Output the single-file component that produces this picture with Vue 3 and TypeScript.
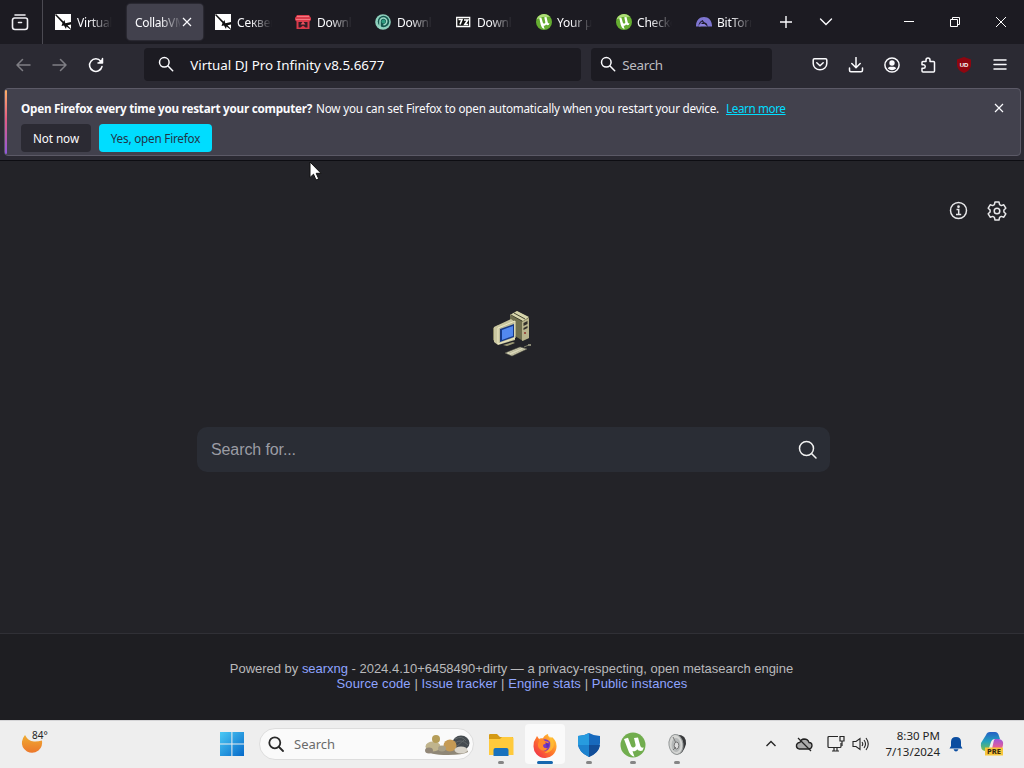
<script setup lang="ts">
interface Tab {
  title: string
  icon: 'arrow' | 'itch' | 'pdown' | 'seven' | 'utorrent' | 'meter' | ''
  active?: boolean
}

const tabs: Tab[] = [
  { title: 'Virtual DJ', icon: 'arrow' },
  { title: 'CollabVM', icon: '', active: true },
  { title: 'Секвенсор', icon: 'arrow' },
  { title: 'Download', icon: 'itch' },
  { title: 'Download', icon: 'pdown' },
  { title: 'Download', icon: 'seven' },
  { title: 'Your µTorrent', icon: 'utorrent' },
  { title: 'Checkout', icon: 'utorrent' },
  { title: 'BitTorrent', icon: 'meter' },
]
</script>

<template>
  <div class="screen">
    <header class="tabbar">
      <div class="view">
        <svg width="18" height="18" viewBox="0 0 18 18" fill="none" stroke="#f0f0f4" stroke-width="1.6" stroke-linecap="round" stroke-linejoin="round">
          <path d="M4 2h10M3.500 5h11a2 2 0 0 1 2 2v7a2.500 2.500 0 0 1-2.500 2.500H4A2.500 2.500 0 0 1 1.500 14V7a2 2 0 0 1 2-2zM7.500 9.500h3" />
        </svg>
      </div>
      <div class="tabs">
        <div v-for="(t, i) in tabs" :key="i" class="tab" :class="{ active: t.active }">
          <svg v-if="t.icon === 'arrow'" class="fav" viewBox="0 0 16 16">
            <path d="M0 0h16v16H0z" fill="#fff" />
            <path d="M0 1l1-1 7.500 7.500 1-1.500.8 3.200L16 8v2.500l-3.500.8L16 15v1l-4.500-3.500L11 15l-2-3.500-2.500.5 1-3z" fill="#111" />
          </svg>
          <svg v-else-if="t.icon === 'itch'" class="fav" viewBox="0 0 16 16">
            <path d="M2 1h12l2 3v2l-1.500 1.500V15h-13V7.500L0 6V4z" fill="#d93b4b" />
            <path d="M2 2.500h12M1 5.500h14" stroke="#f4777f" />
            <path d="M3.500 8h9v5.500h-2l-2.500-2-2.500 2h-2z" fill="#321c26" />
            <path d="M8 7.500l2.500 3h-5z" fill="#ef5360" />
          </svg>
          <svg v-else-if="t.icon === 'pdown'" class="fav" viewBox="0 0 16 16">
            <circle cx="8" cy="8" r="7.800" fill="#8ed0bd" />
            <circle cx="8.500" cy="7.500" r="5.700" fill="#16584f" />
            <path d="M5 14.500V7.500a3.400 3.400 0 1 1 3.400 3.300" fill="none" stroke="#9bd8c5" stroke-width="1.500" />
            <circle cx="8.500" cy="7.500" r="2" fill="#2d9c80" />
          </svg>
          <svg v-else-if="t.icon === 'seven'" class="fav" viewBox="0 0 16 16">
            <path d="M1.700 3.500h13v9h-13z" fill="#111" stroke="#fff" stroke-width="1.300" />
            <path d="M3.500 5.500h3.500L5 10.500M9 6h3.800L9.800 10.500h3.400" fill="none" stroke="#fff" stroke-width="1.600" />
          </svg>
          <svg v-else-if="t.icon === 'utorrent'" class="fav nudge" viewBox="0 0 16 16">
            <circle cx="8" cy="8" r="8" fill="#65ad31" />
            <path d="M.5 5.500a8 8 0 0 1 13.500-2.800L6 3z" fill="#aede78" />
            <path d="M3.300 4l2-.6 1.500 5c.5 1.800 2.700 1.500 2.500-.2L8.300 3.300l2.200-.3 1.300 5.500c.2.800.8.900 1.700.8l-.8 1.800c-1.100.2-2 .1-2.600-.7-.6 1-1.500 1.400-2.500 1.300l1 3.400c-1.800-.1-3.200-2-3.900-4.500z" fill="#fff" />
          </svg>
          <svg v-else-if="t.icon === 'meter'" class="fav nudge" viewBox="0 0 16 16">
            <path d="M0 12.500C-.2 6.500 3.200 3 8 3s8.200 3.500 8 9.500h-4.500c0-2.500-1.200-4-3.500-4s-3.600 1.500-3.500 4z" fill="#7e75d0" />
            <path d="M6 6.500l5 6M3 11.500Q4 7 7 7" fill="none" stroke="#252139" stroke-width="1.200" />
            <path d="M3.500 10h5l3 2.500H3z" fill="#8d83dd" />
          </svg>
          <span class="title">{{ t.title }}</span>
          <svg v-if="t.active" class="close" width="10" height="10" viewBox="0 0 10 10"><path d="M1 1l8 8M9 1L1 9" stroke="#fbfbfe" stroke-width="1.200" /></svg>
        </div>
      </div>
      <div class="tabtool first"><svg width="14" height="14" viewBox="0 0 14 14"><path d="M7 1v12M1 7h12" stroke="#fbfbfe" stroke-width="1.400" /></svg></div>
      <div class="tabtool"><svg width="14" height="14" viewBox="0 0 14 14"><path d="M1.500 4L7 9.500 12.500 4" fill="none" stroke="#fbfbfe" stroke-width="1.400" stroke-linecap="round" /></svg></div>
      <div class="window">
        <div><svg width="12" height="12" viewBox="0 0 12 12"><path d="M1 5.500h10" stroke="#fff" /></svg></div>
        <div><svg width="12" height="12" viewBox="0 0 12 12" fill="none" stroke="#fff"><path d="M1.500 3.500h7v7h-7zM3.500 3V1.500h7v7H9" /></svg></div>
        <div><svg width="12" height="12" viewBox="0 0 12 12"><path d="M1 1l10 10M11 1L1 11" stroke="#fff" stroke-width="1" /></svg></div>
      </div>
    </header>

    <nav class="toolbar">
      <div class="tool dim"><svg width="16" height="16" viewBox="0 0 16 16"><path d="M15 8H2M7.500 2.500L2 8l5.500 5.500" /></svg></div>
      <div class="tool dim"><svg width="16" height="16" viewBox="0 0 16 16"><path d="M1 8h13M8.500 2.500L14 8l-5.500 5.500" /></svg></div>
      <div class="tool"><svg width="16" height="16" viewBox="0 0 16 16"><path d="M14 9.500A6.300 6.300 0 1 1 12.800 4.200M14.500 1.500V6H10" /><path d="M14.500 1.500V6H10z" class="solid" /></svg></div>
      <div class="url">
        <svg width="16" height="16" viewBox="0 0 16 16"><circle cx="6.300" cy="6.300" r="4.800" /><path d="M10 10l4.700 4.700" /></svg>
        <span>Virtual DJ Pro Infinity v8.5.6677</span>
      </div>
      <div class="find">
        <svg width="16" height="16" viewBox="0 0 16 16"><circle cx="6.300" cy="6.300" r="4.800" /><path d="M10 10l4.700 4.700" /></svg>
        <span>Search</span>
      </div>
      <div class="actions">
        <div class="tool"><svg width="16" height="16" viewBox="0 0 16 16"><path d="M2.500 1.800h11a1.300 1.300 0 0 1 1.300 1.300V6.500a6.800 6.300 0 0 1-13.600 0V3.100a1.300 1.300 0 0 1 1.300-1.300zM4.800 5.800L8 8.800l3.200-3" /></svg></div>
        <div class="tool"><svg width="16" height="16" viewBox="0 0 16 16"><path d="M8 .5v10M3.800 6.500L8 10.700l4.200-4.200M1.500 11v2.300a1.500 1.500 0 0 0 1.500 1.500h10a1.500 1.500 0 0 0 1.500-1.500V11" /></svg></div>
        <div class="tool"><svg width="16" height="16" viewBox="0 0 16 16"><circle cx="8" cy="8" r="7.100" /><circle cx="8" cy="6" r="2.700" class="solid" /><path d="M3.800 11.500Q4.500 9.800 6 9.800h4q1.500 0 2.200 1.700Q8 15 3.800 11.500z" class="solid" /></svg></div>
        <div class="tool"><svg width="16" height="16" viewBox="0 0 16 16"><path d="M6 4V3a2 2 0 0 1 4 0v1.500h3.500a1 1 0 0 1 1 1V14a1 1 0 0 1-1 1H3a1 1 0 0 1-1-1v-2.700h1.500a1.700 1.700 0 0 0 0-3.500H2V5.500a1 1 0 0 1 1-1h3z" /></svg></div>
        <div class="tool"><svg width="18" height="18" viewBox="0 0 18 18"><path d="M9 1l7 2.500v5.500q0 5-7 8-7-3-7-8V3.500z" fill="#8e0610" stroke="none" /><text x="9" y="10.500" text-anchor="middle" font-size="6" font-weight="700" fill="#fff" stroke="none" font-family="Liberation Sans, sans-serif">UD</text></svg></div>
        <div class="tool"><svg width="14" height="14" viewBox="0 0 14 14"><path d="M1 2h12M1 6.500h12M1 11h12" /></svg></div>
      </div>
    </nav>

    <section class="notice-wrap">
      <div class="notice">
        <div class="message">
          <strong>Open Firefox every time you restart your computer?</strong>
          <span class="detail">Now you can set Firefox to open automatically when you restart your device.</span>
          <a>Learn more</a>
          <svg class="dismiss" width="10" height="10" viewBox="0 0 10 10"><path d="M1 1l8 8M9 1L1 9" stroke="#fbfbfe" stroke-width="1.200" /></svg>
        </div>
        <div class="buttons">
          <div class="btn">Not now</div>
          <div class="btn primary">Yes, open Firefox</div>
        </div>
      </div>
    </section>

    <main class="page">
      <div class="prefs">
        <svg width="20" height="20" viewBox="0 0 20 20" fill="none" stroke="#e7e7e9" stroke-width="1.500"><circle cx="9.500" cy="9.500" r="8" /><path d="M7.500 8.500h2.200v5M7 13.500h5.200" /><circle cx="9.500" cy="5.700" r=".6" fill="#eee" /></svg>
        <svg width="22" height="22" viewBox="0 0 22 22" fill="none" stroke="#e7e7e9" stroke-width="1.500" stroke-linejoin="round"><path d="M9 2h4l.6 2.600 1.700 1 2.500-.8 2 3.400-1.900 1.800v2l1.900 1.800-2 3.400-2.500-.8-1.700 1L13 20H9l-.6-2.600-1.700-1-2.500.8-2-3.400L4.100 12v-2L2.200 8.200l2-3.400 2.500.8 1.700-1z" /><circle cx="11" cy="11" r="2.800" /></svg>
      </div>
      <svg class="computer" width="44" height="50" viewBox="0 0 44 50">
        <path d="M20 5L27 1 39 8v20l-6 3-13-8z" fill="#706f4e" />
        <path d="M20 5L27 1 39 7l-6 4z" fill="#d6d4ab" />
        <path d="M21 5l11 6M24 3l11 6" stroke="#444431" />
        <path d="M32 12l7-4v20l-7 3z" fill="#b8b48c" />
        <path d="M33.500 13l4-2v3l-4 2zM33.500 18l4-2v2l-4 2z" fill="#302f2a" />
        <path d="M34 23h2" stroke="#9b5143" stroke-width="2" />
        <path d="M3 18L8 15v18l-5-3z" fill="#858260" />
        <path d="M4 17L21 9l4 3v18L8 35l-4-3z" fill="#c9c6a0" />
        <path d="M8 18l17-7v17L8 34z" fill="#bfbd9b" stroke="#eeeac4" />
        <path d="M10 19l14-5v13l-14 5z" fill="#173986" />
        <path d="M12 20l11-4v10l-11 4z" fill="#5288ef" />
        <path d="M13 35l10-3 2 1-8 3z" fill="#9e9b77" />
        <path d="M15 43l15-6 7 2-15 7z" fill="#d9d6b9" stroke="#5b5b4b" stroke-width=".6" />
        <path d="M19 43l12-5M21 45l13-6" stroke="#aaa98b" stroke-width=".7" />
        <path d="M34 37l5-2" stroke="#777764" /><path d="M38 34h3v2h-3z" fill="#8a8975" />
      </svg>
      <div class="searchbox">
        <span>Search for...</span>
        <svg width="20" height="20" viewBox="0 0 20 20" fill="none" stroke="#f1f1f1" stroke-width="1.500"><circle cx="8.500" cy="8.500" r="7" /><path d="M13.500 13.500l4.500 4.500" stroke-linecap="round" /></svg>
      </div>
      <footer>
        <p>Powered by <a>searxng</a> - 2024.4.10+6458490+dirty — a privacy-respecting, open metasearch engine</p>
        <p class="links"><a>Source code</a> | <a>Issue tracker</a> | <a>Engine stats</a> | <a>Public instances</a></p>
      </footer>
    </main>

    <div class="taskbar">
      <div class="weather">
        <svg width="22" height="24" viewBox="0 0 22 24">
          <defs><linearGradient id="sun" x2="0" y2="1"><stop stop-color="#efad33" /><stop offset="1" stop-color="#ec772b" /></linearGradient></defs>
          <path d="M4 3Q7 9 13 9.500q4 .2 8-1 1 6-3.500 10-5.500 4-11.500 1-6-4-5-10Q1.500 6 4 3z" fill="url(#sun)" />
        </svg>
        <span>84°</span>
      </div>
      <svg class="start" width="24" height="24" viewBox="0 0 24 24">
        <defs><linearGradient id="win" x2="1" y2="1"><stop stop-color="#4ccaf5" /><stop offset="1" stop-color="#0669c9" /></linearGradient></defs>
        <path d="M0 0h11.400v11.400H0zM12.400 0H24v11.400H12.400zM0 12.400h11.400V24H0zM12.400 12.400H24V24H12.400z" fill="url(#win)" />
      </svg>
      <div class="tasksearch">
        <svg width="16" height="16" viewBox="0 0 16 16" fill="none" stroke="#292929" stroke-width="1.800"><circle cx="6.800" cy="6.800" r="5.500" /><path d="M11 11l4 4" stroke-linecap="round" /></svg>
        <span>Search</span>
        <svg class="stones" width="48" height="22" viewBox="0 0 48 22">
          <path d="M3 16q4-4 11-3l24 1q7 1 7 4-5 3-20 3-20 0-22-5z" fill="#8f8776" />
          <ellipse cx="38" cy="9" rx="8.500" ry="7.500" fill="#454b50" /><path d="M32 5q7-4 11 2M32 9q6-5 13 2M33 13l8-7" stroke="#62686a" fill="none" />
          <ellipse cx="10" cy="12.500" rx="7.500" ry="5" fill="#c0b48d" /><ellipse cx="27" cy="11.500" rx="6.500" ry="6" fill="#c59a54" />
          <ellipse cx="13" cy="5" rx="4" ry="4" fill="#b59d59" /><ellipse cx="6" cy="16.500" rx="4" ry="3" fill="#928777" />
          <ellipse cx="38" cy="16" rx="6.500" ry="3.500" fill="#d8d4ca" /><ellipse cx="19" cy="14.500" rx="4" ry="3" fill="#a79f88" />
        </svg>
      </div>
      <div class="apps">
        <div class="app"><svg width="26" height="26" viewBox="0 0 26 26"><path d="M1 3q0-1 1-1h7l3 3h13v5H1z" fill="#d59a14" /><path d="M1 7h11l2-2h10q1.500 0 1.500 1.500V23H1z" fill="#ffca3c" /><path d="M5.500 24v-6q0-2 2-2h11q2 0 2 2v6z" fill="#1871bd" /></svg><i /></div>
        <div class="app current"><svg width="26" height="26" viewBox="0 0 26 26">
          <defs><linearGradient id="fox" x1="1" x2="0" y2="1"><stop stop-color="#ffda36" /><stop offset=".5" stop-color="#ff772b" /><stop offset="1" stop-color="#ec224f" /></linearGradient></defs>
          <path d="M5 4l2 3q2-1 4-.7 1-3 5-4.300 0 3 3 4l1-1q5 4 4.500 10A11.500 11.500 0 0 1 1.500 14Q1.500 9 4 6z" fill="url(#fox)" />
          <circle cx="13" cy="13" r="5.800" fill="#7839c5" /><path d="M7 7q4-1 6 2l4 1q-1 2-4 2-2 0-2 2 1 3 5 2-3 4-7 2-5-3-2-9z" fill="#ff8a2c" /><path d="M17.500 4q6 5 4 11-3 6-9 6 8-4 5-17z" fill="#ffc434" opacity=".7" />
          <path d="M13 10.500q4 0 4 3.500-1 2-3 2 1.500-2-1-5.500z" fill="#5d32b4" />
        </svg><i /></div>
        <div class="app"><svg width="26" height="26" viewBox="0 0 26 26"><path d="M13 1q5 3 11 3v7q0 9-11 14Q2 20 2 11V4q6 0 11-3z" fill="#1769bd" /><path d="M13 1v12H2V4q6 0 11-3z" fill="#279bdf" /><path d="M13 13h11q-1 8-11 12z" fill="#114d98" /><path d="M2 13h11v12Q3 20 2 13z" fill="#1d82ce" /></svg><i /></div>
        <div class="app"><svg width="26" height="26" viewBox="0 0 26 26"><circle cx="13" cy="13" r="12.500" fill="#71ad4e" /><path d="M4 7l4-1.300 3 8c1 3 5 2 4.600-1L14 6l4-.5 2.300 8.300c.5 1.500 1.300 2 3.400 1.800l-1.300 3.200c-2.400.4-4.200 0-5.200-1.500-1 1.800-2.600 2.200-4.700 2l2 5.400c-3-.4-5.300-3-6.500-7z" fill="#fff" /></svg><i /></div>
        <div class="app"><svg width="26" height="26" viewBox="0 0 26 26"><path d="M9 3q14-2 13 9Q19 24 11 22z" fill="#38393b" /><ellipse cx="12" cy="12.500" rx="7" ry="10" transform="rotate(-8 12 12.500)" fill="#d4d5d3" stroke="#969a9a" /><ellipse cx="12" cy="13" rx="4.500" ry="7" fill="#b5b8b8" /><ellipse cx="12.500" cy="13.500" rx="2.300" ry="3.500" fill="#ddd" stroke="#777" /><path d="M9 5l3 6M9 18l3-3" stroke="#777" /></svg><i /></div>
      </div>
      <div class="tray">
        <svg class="up" width="12" height="12" viewBox="0 0 12 12"><path d="M1.500 8L6 3.500 10.500 8" fill="none" stroke="#252525" stroke-width="1.400" /></svg>
        <svg class="cloud" width="18" height="16" viewBox="0 0 18 16"><path d="M4 13q-3-1-2.500-4Q2 6.500 5 6.300q1-3 4-3.300 4 0 5 3.500 3 0 3 3t-3 3.500z" fill="#aaa" stroke="#222" stroke-width="1.300" /><path d="M3 2l13 13" stroke="#222" stroke-width="1.300" /></svg>
        <svg class="display" width="18" height="17" viewBox="0 0 18 17" fill="none" stroke="#252525" stroke-width="1.200"><path d="M11 1.500H2q-1 0-1 1v9q0 1 1 1h11q1 0 1-1V8M5 16h7M7 13v3M10 13v3" /><path d="M13 1.500h4V6h-4zM15 6v5" /></svg>
        <svg class="sound" width="18" height="16" viewBox="0 0 18 16" fill="none" stroke="#252525" stroke-width="1.100"><path d="M1 5.500h3l4-3v11l-4-3H1zM10 6q1.500 2 0 4M12 4q3 4 0 8M14 2q4.500 6 0 12" /></svg>
        <div class="clock"><div>8:30 PM</div><div>7/13/2024</div></div>
        <svg class="bell" width="14" height="16" viewBox="0 0 14 16"><path d="M7 1q5 0 5 5v4l1.500 2.500H.5L2 10V6q0-5 5-5zM4.500 13.300h5Q8.500 15.500 7 15.500t-2.500-2.200z" fill="#0a4da0" /></svg>
        <svg class="copilot" width="24" height="26" viewBox="0 0 24 26">
          <defs>
            <linearGradient id="cool" x2="0" y2="1"><stop stop-color="#245fc5" /><stop offset=".5" stop-color="#22a2bd" /><stop offset="1" stop-color="#7fbf4a" /></linearGradient>
            <linearGradient id="warm" x2="0" y2="1"><stop stop-color="#9c55dc" /><stop offset=".6" stop-color="#ed6090" /><stop offset="1" stop-color="#f39a55" /></linearGradient>
          </defs>
          <path d="M6 4q1-3 4-3h5q3 0 4 4l1 3h-5q-3 0-4 3l-2 6q-1 3-4 3-5-1-4-8z" fill="url(#cool)" />
          <path d="M15 8h4q5 1 4 6-1 7-7 9H9q3-1 3-5l1.500-7q.5-3 1.500-3z" fill="url(#warm)" />
          <path d="M5 16.500h18v8H5z" fill="#f7c63b" /><text x="14" y="23.200" text-anchor="middle" font-family="Noto Sans, sans-serif" font-size="7.500" font-weight="800" fill="#382913">PRE</text>
        </svg>
      </div>
    </div>

    <svg class="cursor" width="13" height="20" viewBox="0 0 13 20"><path d="M1 1v15.500l3.500-3.300L7 19l2.700-1.200-2.500-5.500H12z" fill="#fff" stroke="#111" /></svg>
  </div>
</template>

<style>
html, body { margin: 0; overflow: hidden; }
</style>

<style scoped>
* { box-sizing: border-box; }
.screen { position: relative; width: 1024px; height: 768px; display: flex; flex-direction: column; background: #232328; font-family: "Noto Sans", "Open Sans", sans-serif; color: #fbfbfe; overflow: hidden; }
svg { flex: none; display: block; }
.tabbar { height: 44px; display: flex; background: #1c1b22; }
.view { width: 43px; border-right: 1px solid #4b4a52; display: flex; align-items: center; justify-content: center; padding-right: 2px; }
.tabs { display: flex; padding: 4px 0 4px 4px; gap: 4px; }
.tab { width: 76px; height: 36px; border-radius: 4px; padding: 0 8px; display: flex; align-items: center; font-size: 12px; overflow: hidden; }
.tab.active { background: #42414d; box-shadow: 0 0 2px #55535f; }
.fav { width: 16px; height: 16px; margin-right: 6px; }
.fav.nudge { margin-left: 1px; margin-right: 5px; }
.title { flex: 1; min-width: 0; overflow: hidden; white-space: nowrap; letter-spacing: -.2px; mask-image: linear-gradient(90deg, #000 35%, transparent 92%); }
.active .title { letter-spacing: -.35px; mask-image: linear-gradient(90deg, #000 55%, transparent 105%); }
.close { margin: 0 3px 0 2px; }
.tabtool { width: 40px; display: flex; justify-content: center; align-items: center; }
.tabtool.first { margin-left: 2.500px; }
.window { margin-left: auto; display: flex; }
.window div { width: 46px; display: flex; align-items: center; justify-content: center; }
.toolbar { height: 44px; padding: 4px 6px 7px 5px; display: flex; align-items: center; background: #2b2a33; }
.tool { width: 36.400px; display: flex; justify-content: center; align-items: center; }
.tool svg, .url svg, .find svg { fill: none; stroke: #fbfbfe; stroke-width: 1.500; stroke-linecap: round; stroke-linejoin: round; }
.tool .solid { fill: #fbfbfe; stroke: none; }
.dim { opacity: .4; }
.url, .find { height: 33px; border-radius: 4px; background: #1c1b22; display: flex; align-items: center; font-size: 13.400px; }
.url svg, .find svg { margin-top: -1px; }
.url { width: 437px; margin-left: 30px; padding-left: 14px; gap: 16px; letter-spacing: 0; }
.find { width: 181px; margin-left: 10px; padding-left: 9px; gap: 6px; color: #bdbdc1; letter-spacing: -.3px; }
.actions { display: flex; margin-left: auto; }
.actions .tool { width: 36px; }
.notice-wrap { height: 73px; padding: 0 3px 4px 4px; background: #2b2a33; border-bottom: 1px solid #0d0d12; }
.notice { position: relative; height: 68px; background: #42414d; border: 1px solid #5c5a67; border-radius: 4px; padding: 9px 16px 0; }
.notice::before { content: ""; position: absolute; left: 0; top: 1px; bottom: 1px; width: 2px; border-radius: 2px; background: linear-gradient(#ffb065, #e45b83 45%, #9059de); }
.message { height: 20px; display: flex; align-items: center; font-size: 11.700px; white-space: nowrap; }
.message strong { width: 295px; letter-spacing: -.24px; }
.detail { width: 410px; letter-spacing: -.2px; }
.message a { color: #00ddff; text-decoration: underline; letter-spacing: -.4px; }
.dismiss { margin-left: auto; }
.buttons { display: flex; gap: 8px; margin-top: 6px; }
.btn { width: 70px; height: 28px; border-radius: 4px; display: flex; align-items: center; justify-content: center; font-size: 11.700px; letter-spacing: -.05px; background: #2b2a33; white-space: nowrap; }
.btn.primary { width: 113px; background: #00ddff; color: #203448; letter-spacing: -.2px; }
.page { height: 559px; display: flex; flex-direction: column; align-items: center; background: #232328; font-family: "Liberation Sans", sans-serif; }
.prefs { align-self: flex-end; display: flex; align-items: center; gap: 17px; margin: 39px 16px 0 0; }
.computer { margin-top: 88px; }
.searchbox { width: 633px; height: 45px; margin: 67px 0 0 3px; border-radius: 10px; background: #2a2d35; display: flex; align-items: center; justify-content: space-between; padding: 0 12px 0 14px; color: #9b9ca4; font-size: 16px; letter-spacing: -.1px; }
footer { width: 100%; height: 87px; margin-top: auto; padding-top: 27px; background: #1e1e22; border-top: 1px solid #303036; text-align: center; color: #b9b9bb; font-size: 13px; line-height: 15px; }
p { margin: 0; letter-spacing: -.02px; white-space: nowrap; }
footer p:first-child { margin-left: -1px; }
footer .links { letter-spacing: .1px; }
footer a { color: #8fa4ff; }
.taskbar { height: 48px; padding-bottom: 2px; background: #eee; border-top: 1px solid #d4d4d6; display: flex; align-items: center; color: #242424; }
.weather { width: 220px; padding-left: 21px; display: flex; position: relative; }
.weather span { position: absolute; left: 32px; top: -5px; font-size: 10px; line-height: 16px; text-shadow: 0 0 2px #eee, 0 0 2px #eee; }
.start { margin-left: 0; }
.tasksearch { width: 215px; height: 32px; margin-left: 15px; border-radius: 16px; background: #fafafa; border: 1px solid #ddd; display: flex; align-items: center; padding: 0 2px 0 8px; font-size: 13px; color: #6a6a6a; }
.tasksearch span { margin-left: 10px; }
.stones { margin-left: auto; margin-top: 3px; }
.apps { display: flex; gap: 4px; margin-left: 7px; }
.app { width: 40px; height: 40px; display: flex; flex-direction: column; align-items: center; justify-content: flex-end; }
.app.current { background: #fafafa; border-radius: 4px; }
.app i { width: 6px; height: 3px; border-radius: 2px; background: #858585; margin-top: 3px; }
.app.current i { width: 16px; background: #1667ae; }
.tray { margin-left: auto; margin-right: 20px; display: flex; align-items: center; }
.up { margin-right: 1px; }
.cloud { margin-left: 17px; }
.display { margin-left: 14px; }
.sound { margin-left: 7px; }
.clock { width: 70px; text-align: right; font-size: 11.500px; line-height: 16px; letter-spacing: 0; }
.bell { margin-left: 9px; }
.copilot { margin-left: 17px; }
.cursor { position: absolute; left: 309px; top: 161px; }
</style>
